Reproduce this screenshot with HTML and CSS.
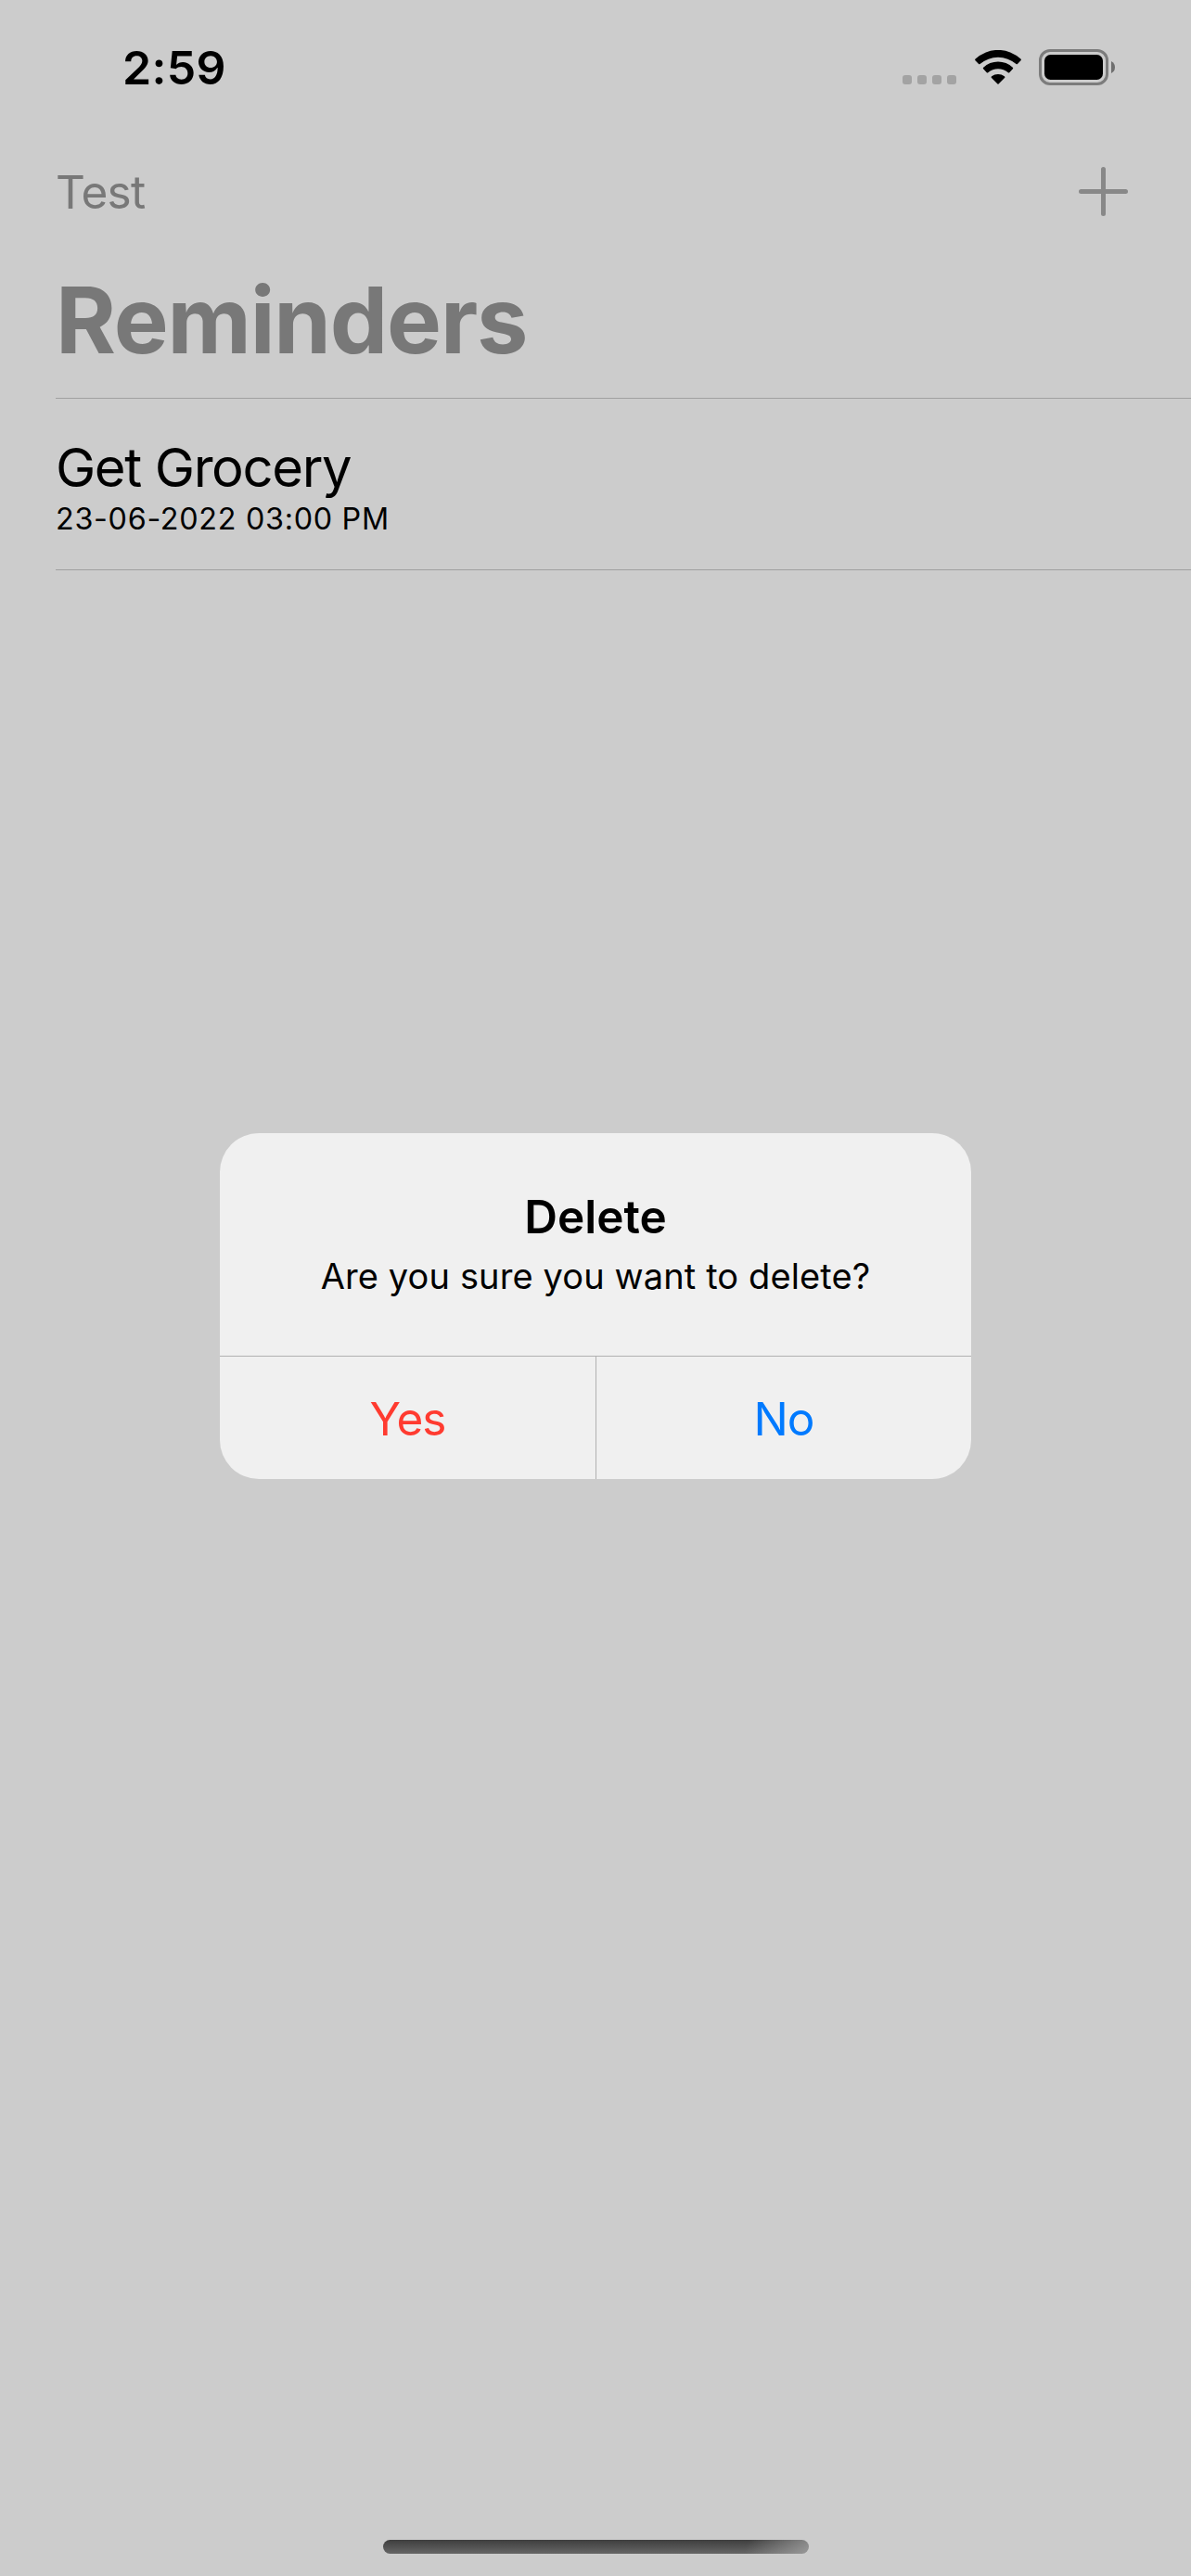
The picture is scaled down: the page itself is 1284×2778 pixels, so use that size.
FILE: index.html
```html
<!DOCTYPE html>
<html lang="en">
<head>
<meta charset="utf-8">
<title>Reminders</title>
<link rel="stylesheet" href="styles.css">
</head>
<body>
<main class="screen">
  <header class="status-bar">
    <span class="time">2:59</span>
    <div class="indicators">
      <div class="signal"><i class="dot"></i><i class="dot"></i><i class="dot"></i><i class="dot"></i></div>
      <svg class="wifi" viewBox="0 0 50 37" width="50" height="37">
        <path d="M.5 11.2Q-.3 10.4.6 9.6A35.5 35.5 0 0 1 49.4 9.6Q50.3 10.4 49.5 11.2L45.9 15Q45.3 15.7 44.5 15A30 30 0 0 0 5.500 15Q4.700 15.700 4.100 15Z"/>
        <path d="M9.100 20.300Q8.300 19.500 9.200 18.700A23 23 0 0 1 40.800 18.700Q41.700 19.500 40.900 20.300L37.200 24.200Q36.600 24.900 35.800 24.200A16.500 16.500 0 0 0 14.200 24.200Q13.400 24.900 12.800 24.200Z"/>
        <path d="M18 29.900Q17.200 29.100 18.100 28.300A11.300 11.300 0 0 1 31.900 28.300Q32.800 29.100 32 29.900L25.500 36.600Q25 37.100 24.500 36.600Z"/>
      </svg>
      <svg class="battery" viewBox="0 0 82 39" width="82" height="39">
        <rect class="battery-shell" x="1.500" y="1.500" width="72" height="36" rx="10.500"/>
        <rect x="6" y="6" width="63" height="27" rx="6.500"/>
        <path class="battery-cap" d="M78 13Q82 15 82 19.500T78 26Z"/>
      </svg>
    </div>
  </header>
  <nav class="nav-bar">
    <span class="nav-action">Test</span>
    <svg class="plus" viewBox="0 0 53 53" width="53" height="53"><path d="M26.500 2.500V50.500M2.500 26.500H50.500"/></svg>
  </nav>
  <h1 class="page-title">Reminders</h1>
  <ul class="list">
    <li class="reminder">
      <span class="reminder-title">Get Grocery</span>
      <span class="reminder-date">23-06-2022 03:00 PM</span>
    </li>
  </ul>
  <div class="home-indicator"></div>
</main>
<div class="overlay">
  <section class="alert" role="alertdialog">
    <div class="alert-body">
      <h2 class="alert-title">Delete</h2>
      <p class="alert-message">Are you sure you want to delete?</p>
    </div>
    <div class="alert-actions">
      <button class="alert-button destructive">Yes</button>
      <button class="alert-button">No</button>
    </div>
  </section>
</div>
</body>
</html>
```

FILE: styles.css
```css
* { box-sizing: border-box; margin: 0; padding: 0; }

body {
  width: 1284px;
  height: 2778px;
  background: #ccc;
  color: #000;
  font-family: Inter, "Liberation Sans", sans-serif;
  overflow: hidden;
}

.screen { display: flex; flex-direction: column; height: 2778px; }

.status-bar {
  display: flex;
  justify-content: space-between;
  align-items: flex-start;
  height: 141px;
  padding: 43px 82px 0 132px;
}
.time { font-size: 50px; font-weight: 600; line-height: 60px; letter-spacing: 0.3px; }
.indicators { display: flex; align-items: flex-end; padding-top: 10px; }
.signal { display: flex; gap: 6px; margin: 0 19.500px 1px 0; }
.dot { width: 10px; height: 10px; border-radius: 3px; background: #a3a3a3; }
.wifi { display: block; margin: 0 19.500px 1px 0; }
.battery { display: block; }
.battery-shell { fill: none; stroke: #7c7c7c; stroke-width: 3; }
.battery-cap { fill: #6f6f6f; }

.nav-bar {
  display: flex;
  justify-content: space-between;
  align-items: center;
  height: 132px;
  padding: 0 68px 0 60px;
}
.nav-action { font-size: 49.500px; line-height: 60px; color: #787878; letter-spacing: -0.7px; }
.plus { display: block; margin-bottom: 1px; fill: none; stroke: #888; stroke-width: 5; stroke-linecap: round; }

.page-title {
  height: 156px;
  padding-left: 60px;
  font-size: 99px;
  font-weight: 700;
  line-height: 144px;
  letter-spacing: -1.15px;
  color: #787878;
}

.list { flex: 1; list-style: none; margin-left: 60px; border-top: 1px solid #a0a0a0; }
.reminder {
  display: flex;
  flex-direction: column;
  height: 185px;
  padding-top: 38px;
  border-bottom: 1px solid #a0a0a0;
}
.reminder-title { font-size: 58px; line-height: 72px; letter-spacing: -1.4px; }
.reminder-date { padding-top: 1px; font-size: 32.300px; line-height: 38px; letter-spacing: 0.7px; }

.home-indicator {
  align-self: center;
  width: 459px;
  height: 15px;
  margin-bottom: 24px;
  border-radius: 7.500px;
  background:
    linear-gradient(105deg, transparent 85%, rgba(180, 180, 180, .65) 100%),
    linear-gradient(#3e3e3e, #666);
}

/* Sits above the dimmed screen, centred below the status bar */
.overlay {
  position: absolute;
  top: 0;
  left: 0;
  width: 1284px;
  height: 2778px;
  display: flex;
  align-items: center;
  justify-content: center;
  padding-top: 39px;
}
.alert {
  width: 810px;
  height: 373px;
  border-radius: 42px;
  background: #f0f0f0;
  text-align: center;
  overflow: hidden;
}
.alert-body { height: 240px; padding-top: 60px; }
.alert-title { font-size: 49.500px; font-weight: 600; line-height: 60px; letter-spacing: 0; }
.alert-message { padding-top: 9px; font-size: 38px; line-height: 50px; letter-spacing: 0.12px; }
.alert-actions { display: flex; height: 133px; border-top: 1px solid #b1b1b1; }
.alert-button {
  flex: 1;
  padding-top: 2px;
  border: 0;
  background: none;
  color: #007aff;
  font: 400 49.500px/60px Inter, "Liberation Sans", sans-serif;
  letter-spacing: -1px;
}
.destructive { flex: 0 0 406px; border-right: 1px solid #b1b1b1; color: #ff3b30; }
```
